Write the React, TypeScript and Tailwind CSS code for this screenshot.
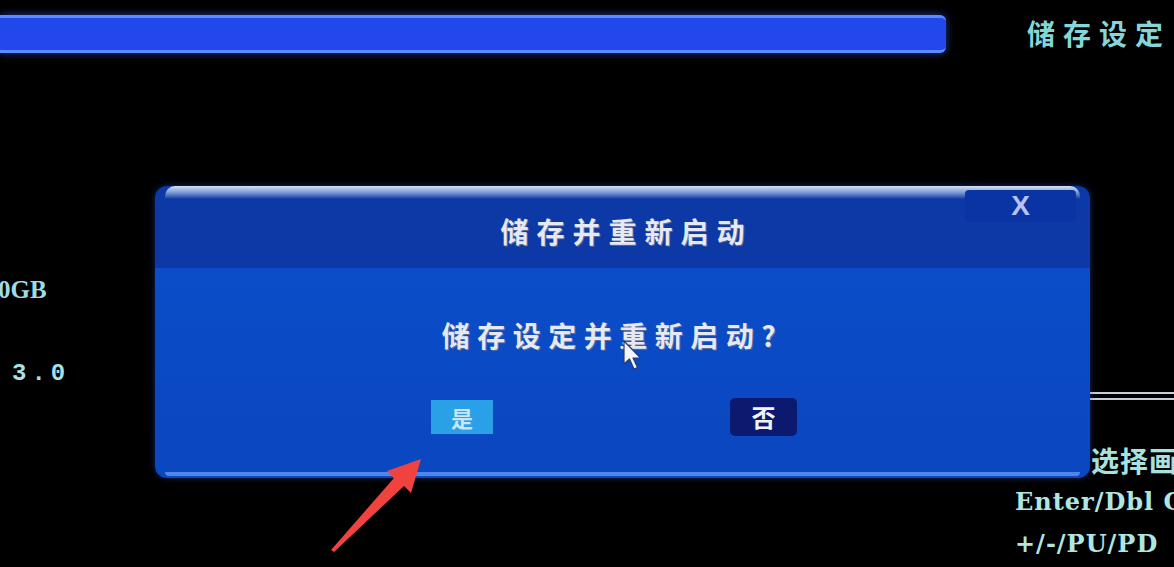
import React from "react";

const cjk = { fontFamily: '"Noto Sans CJK SC", "Noto Sans", sans-serif' };
const slab = { fontFamily: '"DejaVu Serif", "Liberation Serif", "Noto Sans CJK SC", serif' };

function Cursor() {
  return (
    <svg width="22" height="32" viewBox="0 0 22 32" className="absolute left-[622px] top-[340px]">
      <path d="M2 1 L2 24 L7.5 19 L12 29 L15.5 27.5 L11 18 L18.5 18 Z" fill="#f4f6fb" stroke="#2b3a6a" strokeWidth="1.2" strokeLinejoin="round" />
    </svg>
  );
}

function RedArrow() {
  return (
    <svg width="1174" height="567" className="absolute left-0 top-0 pointer-events-none">
      <polygon
        points="331,550 394,478 387,471 421,459 411,493 404,486 334,552"
        fill="#f0433f"
      />
    </svg>
  );
}

function Dialog() {
  return (
    <div className="absolute left-[155px] top-[186px] w-[935px] h-[292px] rounded-[12px] overflow-hidden flex flex-col shadow-[0_0_6px_rgba(40,80,200,0.5)]">
      <div className="h-[82px] bg-[#0c39a6] flex flex-col">
        <div className="h-[13px] mx-[10px] rounded-t-[10px] bg-gradient-to-b from-[#d8e2f2] via-[#7b9ad8] to-[#0c39a6]" />
        <div className="flex-1 flex items-center justify-center pb-[6px]">
          <span
            className="text-[28px] font-bold text-[#e6e9f4] tracking-[8px] pl-[8px] [text-shadow:1px_1px_0_#5a6a9a]"
            style={cjk}
          >
            储存并重新启动
          </span>
        </div>
      </div>
      <div className="flex-1 bg-gradient-to-b from-[#0b4cc8] to-[#0a47c0] flex flex-col relative">
        <div className="flex justify-center pt-[46px] pr-[20px]">
          <span
            className="text-[28px] font-bold text-[#e6e9f4] tracking-[7.5px] [text-shadow:1px_1px_0_#5a6a9a]"
            style={cjk}
          >
            储存设定并重新启动?
          </span>
        </div>
        <div className="flex items-center pl-[276px] gap-[237px] mt-[42px]">
          <div className="w-[62px] h-[34px] bg-[#2aa0e6] flex items-center justify-center">
            <span className="text-[22px] font-bold text-[#c8e6f4]" style={cjk}>是</span>
          </div>
          <div className="w-[67px] h-[38px] bg-[#0b1a6e] rounded-[5px] flex items-center justify-center">
            <span className="text-[24px] font-bold text-[#f2f2fa]" style={cjk}>否</span>
          </div>
        </div>
        <div className="mt-auto h-[4px] mx-[10px] mb-[2px] rounded-b-[8px] bg-[#4f86ea]" />
      </div>
      <div className="absolute right-[14px] top-[4px] w-[111px] h-[32px] bg-[#0a33a4] rounded-[4px] flex items-center justify-center">
        <span className="text-[28px] font-bold leading-none text-[#b9c2f2]" style={{ fontFamily: '"Liberation Sans", sans-serif' }}>X</span>
      </div>
    </div>
  );
}

export default function App() {
  return (
    <div className="relative w-[1174px] h-[567px] bg-black overflow-hidden flex">
      <div className="w-[1015px] shrink-0 flex flex-col">
        <div className="mt-[15px] w-[946px] h-[38px] rounded-r-[6px] bg-[#2247ea] border-y-[3px] border-[#5b8bff] shadow-[0_0_8px_rgba(50,90,255,0.6)]" />
        <div className="mt-[224px] -ml-[2px] text-[25px] font-bold text-[#9fdde6] leading-[26px]" style={{ fontFamily: '"Liberation Serif", serif' }}>
          0GB
        </div>
        <div className="mt-[58px] ml-[12px] text-[24px] font-bold text-[#a8e0e6] leading-[26px] tracking-[5px]" style={{ fontFamily: '"Liberation Mono", monospace' }}>
          3.0
        </div>
      </div>
      <div className="flex-1 flex flex-col whitespace-nowrap overflow-visible">
        <div className="mt-[15px] ml-[12px] text-[28px] font-bold text-[#84d6d8] leading-[36px] tracking-[8px]" style={cjk}>
          储存设定
        </div>
        <div className="mt-[341px] -ml-[60px] flex flex-col gap-[4px]">
          <div className="h-[2px] bg-[#c6cde0]" />
          <div className="h-[2px] bg-[#c6cde0]" />
        </div>
        <div className="mt-[44px] ml-[76px] text-[28px] font-bold text-[#a8e2e0] leading-[32px] tracking-[1px]" style={cjk}>
          选择画面
        </div>
        <div className="mt-[10px] text-[24px] font-bold text-[#b0e6e2] leading-[32px] tracking-[1px]" style={slab}>
          Enter/Dbl Click
        </div>
        <div className="mt-[10px] text-[24px] font-bold text-[#b0e6e2] leading-[32px] tracking-[1px]" style={slab}>
          +/-/PU/PD
        </div>
      </div>
      <Dialog />
      <Cursor />
      <RedArrow />
    </div>
  );
}
